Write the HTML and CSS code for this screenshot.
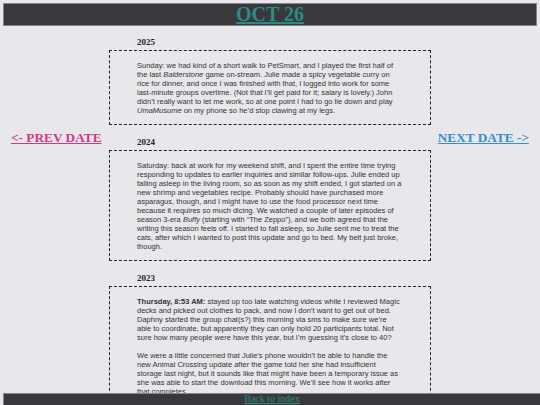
FILE: index.html
```html
<!DOCTYPE html>
<html lang="en">
<head>
    <meta charset="UTF-8">
    <meta name="viewport" content="width=device-width, initial-scale=1.0">
    <title>Oct 26</title>
    <link rel="stylesheet" href="styles.css">
</head>
<body>
    <header class="top-bar">
        <h1><a href="#">OCT 26</a></h1>
    </header>

    <div class="page">
        <nav class="side side-prev">
            <a href="#" class="prev">&lt;- PREV DATE</a>
        </nav>

        <main class="entries">
            <section class="year">
                <h4>2025</h4>
                <div class="entry">
                    <p>Sunday: we had kind of a short walk to PetSmart, and I played the first half of the last <i>Balderstone</i> game on-stream. Julie made a spicy vegetable curry on rice for dinner, and once I was finished with that, I logged into work for some last-minute groups overtime. (Not that I’ll get paid for it; salary is lovely.) John didn’t really want to let me work, so at one point I had to go lie down and play <i>UmaMusume</i> on my phone so he’d stop clawing at my legs.</p>
                </div>
            </section>

            <section class="year">
                <h4>2024</h4>
                <div class="entry">
                    <p>Saturday: back at work for my weekend shift, and I spent the entire time trying responding to updates to earlier inquiries and similar follow-ups. Julie ended up falling asleep in the living room, so as soon as my shift ended, I got started on a new shrimp and vegetables recipe. Probably should have purchased more asparagus, though, and I might have to use the food processor next time because it requires so much dicing. We watched a couple of later episodes of season 3-era <i>Buffy</i> (starting with “The Zeppo”), and we both agreed that the writing this season feels off. I started to fall asleep, so Julie sent me to treat the cats, after which I wanted to post this update and go to bed. My belt just broke, though.</p>
                </div>
            </section>

            <section class="year">
                <h4>2023</h4>
                <div class="entry">
                    <p><b>Thursday, 8:53 AM:</b> stayed up too late watching videos while I reviewed Magic decks and picked out clothes to pack, and now I don’t want to get out of bed. Daphny started the group chat(s?) this morning via sms to make sure we’re able to coordinate, but apparently they can only hold 20 participants total. Not sure how many people were have this year, but I’m guessing it’s close to 40?</p>
                    <p>We were a little concerned that Julie’s phone wouldn’t be able to handle the new Animal Crossing update after the game told her she had insufficient storage last night, but it sounds like that might have been a temporary issue as she was able to start the download this morning. We’ll see how it works after that completes.</p>
                </div>
            </section>
        </main>

        <nav class="side side-next">
            <a href="#" class="next">NEXT DATE -&gt;</a>
        </nav>
    </div>

    <footer class="bottom-bar">
        <a href="#">Back to index</a>
    </footer>
</body>
</html>
```

FILE: styles.css
```css
body {
    margin: 0;
    background-color: #e8e8ec;
    color: #333;
    font-family: "Liberation Serif", "Times New Roman", serif;
}

a {
    color: #2b8c86;
}

.top-bar {
    margin: 3px 3px 0;
    background-color: #39383d;
    border: 1px solid #85858a;
    text-align: center;
}

.top-bar h1 {
    margin: 0;
    font-size: 20px;
    line-height: 21px;
}

.page {
    display: grid;
    grid-template-columns: 109px 322px 1fr;
}

.side {
    padding-top: 104px;
    font-size: 13.3px;
    font-weight: bold;
    line-height: 15px;
}

.side-prev {
    padding-left: 11px;
}

.side-next {
    padding-right: 11px;
    text-align: right;
}

.prev {
    color: #cf3a80;
}

.next {
    color: #3a8dcc;
}

.entries {
    padding: 11px 0 40px;
}

.year + .year {
    margin-top: 12px;
}

.year h4 {
    margin: 0 0 3px 28px;
    font-size: 9px;
    line-height: 10px;
    color: #222;
}

.entry {
    border: 1px dashed #222;
    padding: 10px 28px 9px 27px;
    font-family: "Liberation Sans", Arial, sans-serif;
    font-size: 7.5px;
    line-height: 9px;
}

.entry p {
    margin: 0;
}

.entry p + p {
    margin-top: 9px;
}

.bottom-bar {
    position: fixed;
    left: 3px;
    right: 0;
    bottom: 0;
    height: 11px;
    background-color: #39383d;
    border-top: 1px solid #85858a;
    border-left: 1px solid #85858a;
    text-align: center;
    font-size: 10px;
    line-height: 10px;
}
```
